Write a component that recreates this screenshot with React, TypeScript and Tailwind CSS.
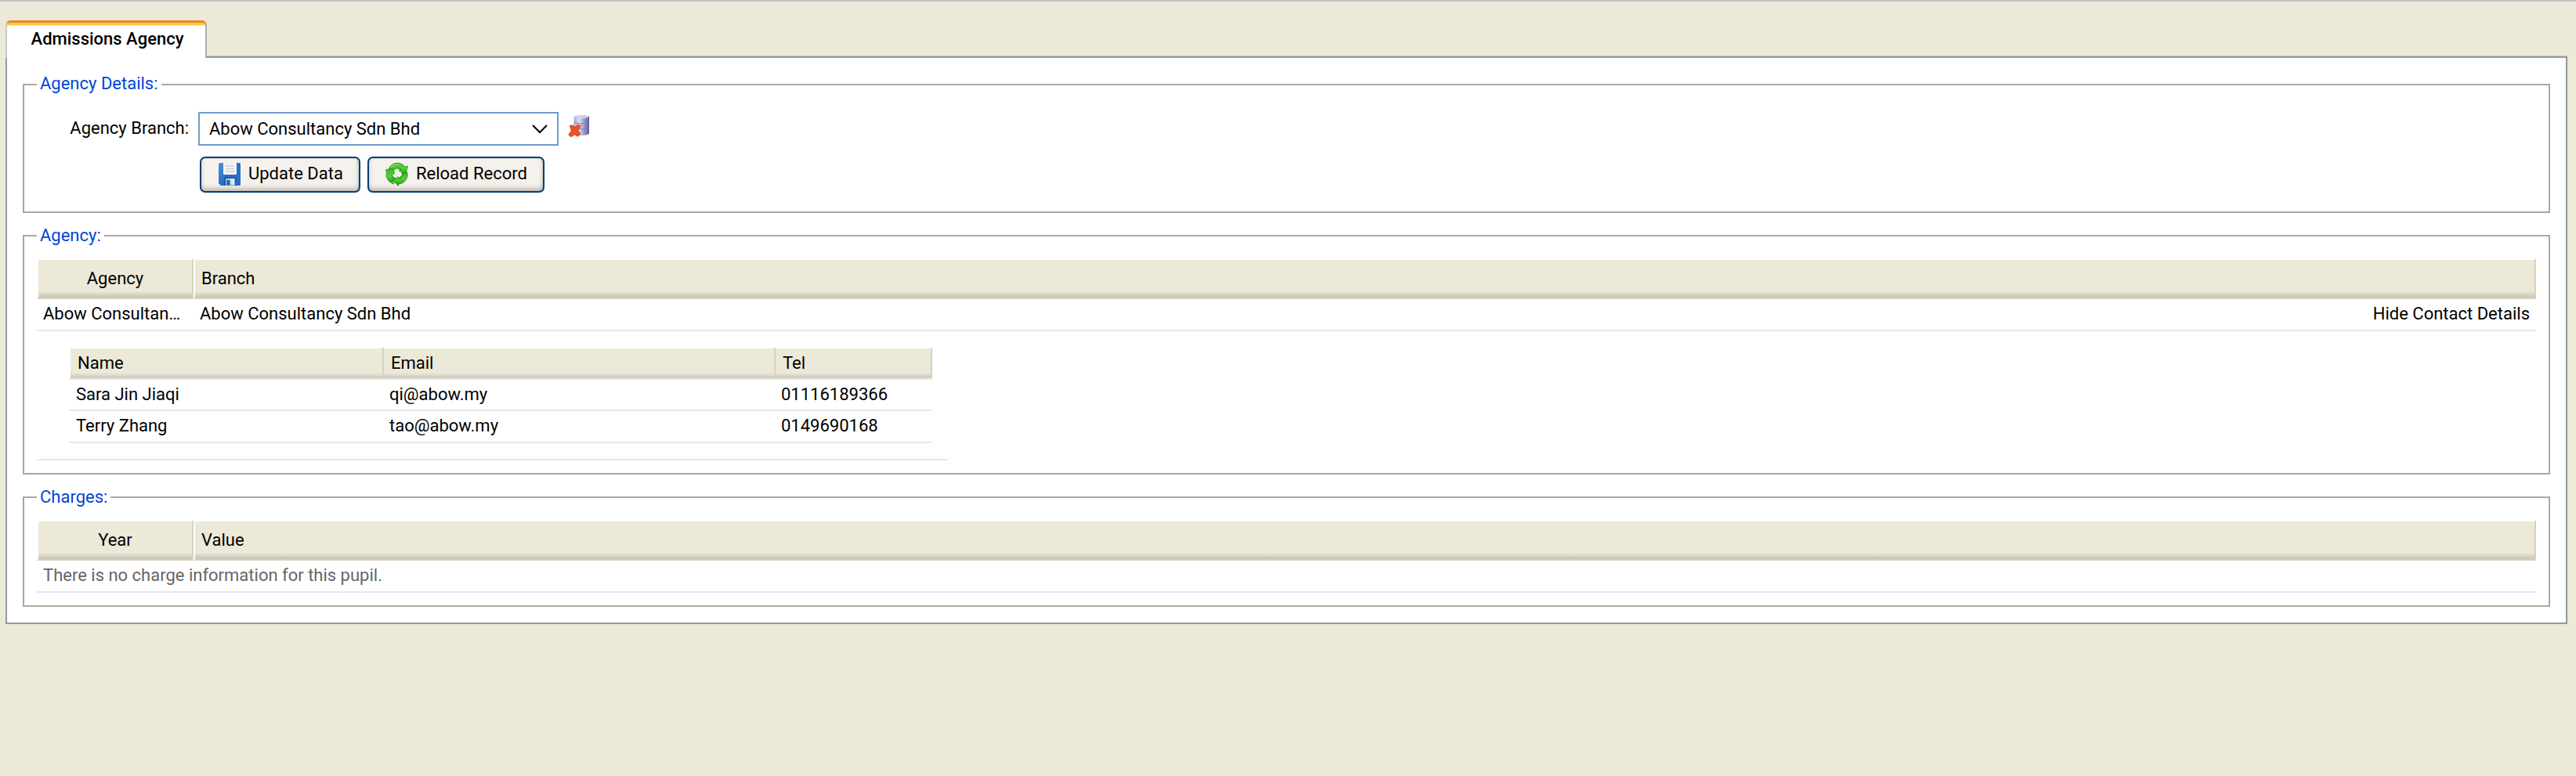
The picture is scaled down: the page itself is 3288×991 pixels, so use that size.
import React from "react";

function Group({
  title,
  className,
  titleClass = "-mt-[15px]",
  children,
}: {
  title: string;
  className: string;
  titleClass?: string;
  children: React.ReactNode;
}) {
  return (
    <section className={`mx-5 flex flex-col border-2 border-[#aca899] ${className}`}>
      <h2 className={`ml-4 h-7 self-start bg-white px-1 leading-[28px] text-[#0046d5] ${titleClass}`}>{title}</h2>
      {children}
    </section>
  );
}

const thBase =
  "border-2 border-t-white border-l-white border-r-[#d8d2bd] border-b-[#d8d2bd] bg-linear-to-b from-[#ece9d8] from-[40px] to-[#cbc7b8] to-[47px] bg-clip-padding";

function HeaderRow({ first, second }: { first: string; second: string }) {
  return (
    <div className="flex h-[52px] leading-[47px]">
      <div className={`w-[200px] text-center ${thBase}`}>{first}</div>
      <div className={`flex-1 pl-2 ${thBase}`}>{second}</div>
    </div>
  );
}

const contacts = [
  ["Sara Jin Jiaqi", "qi@abow.my", "01116189366"],
  ["Terry Zhang", "tao@abow.my", "0149690168"],
];

const subTh =
  "border-l-2 border-t-2 border-t-white bg-linear-to-b from-[#ece9d8] from-[31px] to-[#cbc7b8] bg-clip-padding pl-[9px]";

function SaveIcon() {
  return (
    <svg className="h-8 w-8 shrink-0" viewBox="0 0 32 32">
      <defs>
        <linearGradient id="disk" x1="0" y1="0" x2="1" y2="1">
          <stop offset="0" stopColor="#4c90dc" />
          <stop offset="0.5" stopColor="#2870c8" />
          <stop offset="1" stopColor="#2a6cc2" />
        </linearGradient>
        <linearGradient id="shutter" x1="0" y1="0" x2="1" y2="0">
          <stop offset="0" stopColor="#9fb6d2" />
          <stop offset="1" stopColor="#f2f5f8" />
        </linearGradient>
      </defs>
      <path d="M3.5 2H28.5Q30 2 30 3.5V29.5Q30 31 28.5 31H5L2 28V3.5Q2 2 3.5 2Z" fill="url(#disk)" />
      <path d="M8 2h17v13.5q0 1.5-1.5 1.5h-14q-1.500 0-1.500-1.500z" fill="#f3f3f3" />
      <path d="M11 6h11M11 9.5h11M11 13h11" stroke="#d2d2d2" strokeWidth="1.5" />
      <path d="M9 22q0-2 2-2h11q2 0 2 2v9h-15z" fill="#1d57a8" />
      <path d="M11 22h11.5v8.5h-11.5z" fill="url(#shutter)" />
      <path d="M12.5 24h4v6.500h-4z" fill="#2462b0" />
    </svg>
  );
}

function ReloadIcon() {
  return (
    <svg className="h-8 w-8 shrink-0" viewBox="0 0 32 32">
      <defs>
        <linearGradient id="leaf" x1="0" y1="0" x2="0" y2="1">
          <stop offset="0" stopColor="#3fb325" />
          <stop offset="0.5" stopColor="#55cf3a" />
          <stop offset="1" stopColor="#239512" />
        </linearGradient>
      </defs>
      <circle cx="15.5" cy="15.5" r="9" fill="none" stroke="#37aa22" strokeWidth="6" />
      <g fill="url(#leaf)" stroke="#239a16" strokeWidth="0.8" strokeLinejoin="round">
        <path d="M6 8C9 3 14 1.5 19 2.5C22 3.2 24.5 5 26 7L29.500 6L27 16L18 12L21.5 10.3C18.5 7.5 14.5 8 12.5 11Z" />
        <path d="M29 14C30 20 27.5 25 23 27.5C21 28.600 19 29 17.5 29V31.5L10.5 25L17.5 19.5V22.5C21 22 23 19.5 23 16.5Z" />
        <path d="M12 29C6 27.5 2.5 23 2 18C1.9 16 2.1 14.5 2.5 13L1 11L10.5 8.5L13 17L9.5 16C9 19 10 21.5 12 23L8.5 25.5Z" />
      </g>
      <path d="M8 8C11 4.5 16 3.5 20.5 5" fill="none" stroke="#93e87d" strokeWidth="1.2" />
      <path d="M16 10.500l2 4.500 4.500 2.500-4 2-3.500-1.500-3.500 2 .5-4 3-1.500z" fill="#e8f5e2" />
    </svg>
  );
}

function DatabaseRemoveIcon() {
  return (
    <svg className="h-8 w-8" viewBox="0 0 32 32">
      <defs>
        <linearGradient id="drum" x1="0" y1="0" x2="1" y2="0">
          <stop offset="0" stopColor="#a9a9d6" />
          <stop offset="0.35" stopColor="#dcdcf5" />
          <stop offset="0.7" stopColor="#9494c6" />
          <stop offset="1" stopColor="#5c5c92" />
        </linearGradient>
      </defs>
      <path d="M8.5 6C8.5 3.500 28 3.5 28 6V27C28 31 8.5 31 8.5 27Z" fill="url(#drum)" />
      <ellipse cx="18.2" cy="6.2" rx="9" ry="2" fill="#cfcfee" />
      <path d="M9 13C12 15.5 25 15.5 28 13M9 20C12 22.5 25 22.5 28 20" fill="none" stroke="#7c7cb2" strokeWidth="1" />
      <path
        d="M3.5 17.500L7 17L10 20L13.5 16.5L17 18L13.5 23.500L16.5 28L13.5 31L9.5 28.5L5 31.500L2 29L5.500 24Z"
        fill="#ee5228"
        stroke="#d8431c"
        strokeWidth="1.2"
        strokeLinejoin="round"
      />
    </svg>
  );
}

const button =
  "flex h-[46px] items-center rounded-[7px] border-2 border-[#003c74] bg-[#f5f2ed] pl-5 pb-[3px] shadow-[inset_0_-4px_6px_-1px_#b9b4ae,inset_-1px_0_3px_#d8d3cc]";

export default function App() {
  return (
    <main className="flex h-[991px] w-[3288px] flex-col border-t-2 border-[#c5c5c5] bg-[#ece9d8] font-[Roboto,sans-serif] text-[22px] text-black">
      <div className="relative z-10 mt-6 ml-[7px] h-[48px] w-[257px] rounded-t-[6px] border-x-2 border-t-[3px] border-t-[#e68b2c] border-r-[#a5afb0] border-l-[#c3c9c9] bg-white bg-linear-to-b from-[#ffc73c] from-[3px] to-white to-[4px] pt-[6px] pl-[3px] text-center leading-[29px] font-medium">
        Admissions Agency
      </div>
      <div className="-mt-[2px] ml-[7px] h-[725px] w-[3270px] border-2 border-[#919b9c] bg-white pt-[33px] shadow-[0_-1px_0_#c5c7be]">
        <Group title="Agency Details:" className="h-[165px]" titleClass="-mt-4 mb-px">
          <div className="mt-[21px] flex h-[43px]">
            <div className="w-[222px] pr-[12px] text-right leading-[41px]">Agency Branch:</div>
            <div className="flex w-[460px] items-center justify-between border-2 border-[#7199cd] pr-3 pl-3">
              <span>Abow Consultancy Sdn Bhd</span>
              <svg className="h-3 w-5" viewBox="0 0 20 12">
                <path d="M1 1l9 9 9-9" fill="none" stroke="#000" strokeWidth="2" />
              </svg>
            </div>
            <div className="ml-[11px]">
              <DatabaseRemoveIcon />
            </div>
          </div>
          <div className="mt-[14px] ml-[224px] flex gap-[9px]">
            <button className={`w-[205px] ${button}`}>
              <SaveIcon />
              <span className="ml-2">Update Data</span>
            </button>
            <button className={`w-[226px] ${button}`}>
              <ReloadIcon />
              <span className="ml-2">Reload Record</span>
            </button>
          </div>
        </Group>
        <Group title="Agency:" className="mt-7 h-[306px]">
          <div className="mx-4 mt-[15px]">
            <HeaderRow first="Agency" second="Branch" />
            <div className="flex h-[41px] border-b-2 border-[#e8e8e8] leading-[37px]">
              <div className="w-[200px] overflow-hidden pl-2 whitespace-nowrap">Abow Consultan…</div>
              <div className="flex-1 pl-2">Abow Consultancy Sdn Bhd</div>
              <div className="pr-2">Hide Contact Details</div>
            </div>
            <div className="h-[165px] w-[1163px] border-b-2 border-[#e8e8e8] pt-5 pl-[41px]">
              <div className="w-[1102px]">
                <div className="grid h-[42px] grid-cols-[400px_500px_202px] border-b-2 border-[#e8e8e8] leading-[37px]">
                  <div className={`border-l-white ${subTh}`}>Name</div>
                  <div className={`border-l-[#d8d2bd] ${subTh}`}>Email</div>
                  <div className={`border-r-2 border-r-[#d8d2bd] border-l-[#d8d2bd] ${subTh}`}>Tel</div>
                </div>
                {contacts.map((row) => (
                  <div
                    key={row[0]}
                    className="grid h-10 grid-cols-[400px_500px_202px] border-b-2 border-[#e8e8e8] leading-[37px] last:h-[41px]"
                  >
                    {row.map((cell) => (
                      <div key={cell} className="pl-[9px]">
                        {cell}
                      </div>
                    ))}
                  </div>
                ))}
              </div>
            </div>
          </div>
        </Group>
        <Group title="Charges:" className="mt-7 h-[141px]">
          <div className="mx-4 mt-[15px]">
            <HeaderRow first="Year" second="Value" />
            <div className="h-[41px] border-b-2 border-[#e8e8e8] pl-2 leading-[37px] text-[#666]">
              There is no charge information for this pupil.
            </div>
          </div>
        </Group>
      </div>
    </main>
  );
}
